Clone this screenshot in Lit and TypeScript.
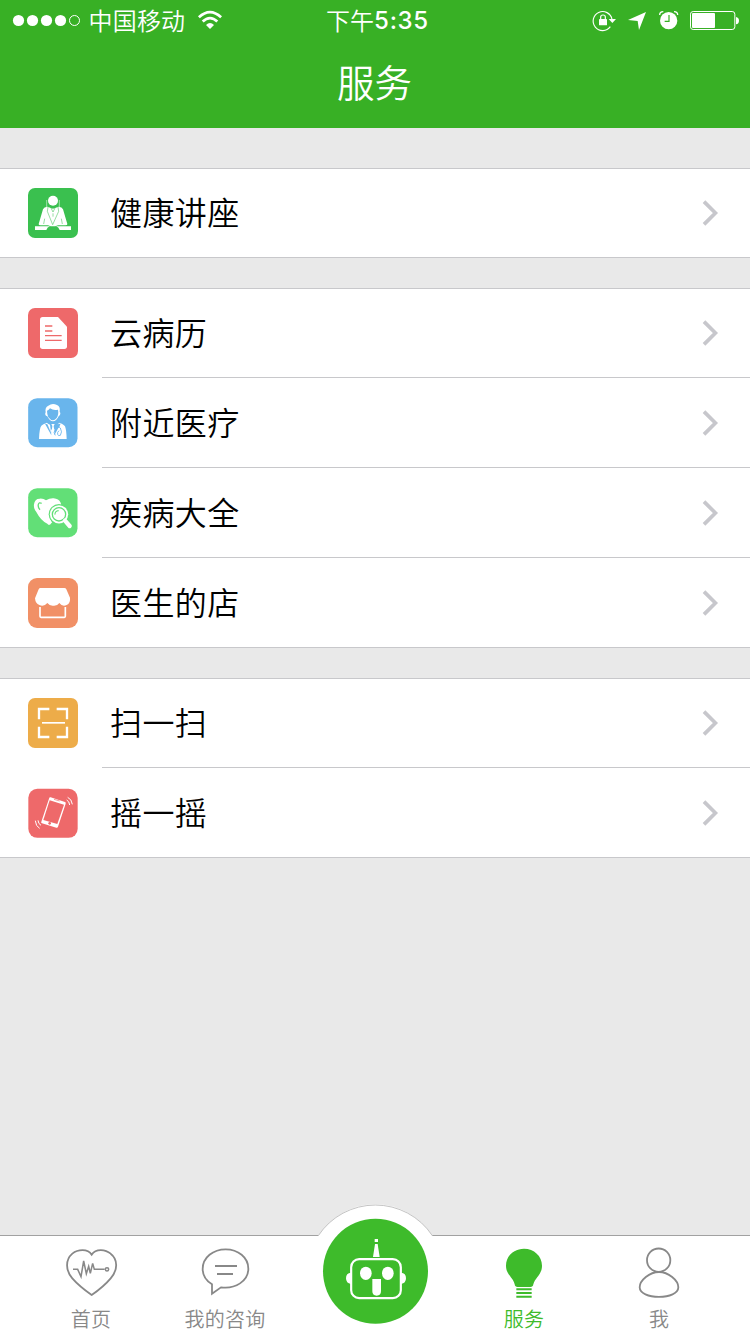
import { LitElement, html, css, svg } from "lit";
import { customElement, property } from "lit/decorators.js";

const icons: Record<string, unknown> = {
  lecture: svg`
    <rect width="150" height="150" rx="21" fill="#3ac04f"/>
    <g fill="#fff">
      <circle cx="75" cy="38" r="15"/>
      <path d="M58 56 Q48 57 45 64 L32 108 Q31 112 38 112 H60 L68 115 H82 L90 112 H112 Q119 112 118 108 L105 64 Q102 57 92 56 L75 62 Z"/>
      <path d="M21 115 H66 Q58 117 55 126 H21 Z M129 115 H84 Q92 117 95 126 H129 Z"/>
    </g>
    <path d="M56 36 V58 M94 36 V58" fill="none" stroke="#fff" stroke-width="1.5"/>
    <path d="M60 57 L58 70 L74 110 L92 70 L90 57 M68 58 L75 72 L82 58 M75 76 V86 M50 92 L47 108 M100 92 L103 108" fill="none" stroke="#3ac04f" stroke-width="1.6"/>`,
  record: svg`
    <rect width="150" height="150" rx="21" fill="#ee696a"/>
    <path d="M44 27 H90 L117 56 V115 Q117 123 109 123 H44 Q36 123 36 115 V35 Q36 27 44 27 Z" fill="#fff"/>
    <path d="M51 54 H73 M51 69 H73 M51 83 H101 M51 97 H101" stroke="#ee696a" stroke-width="3.8"/>`,
  doctor: svg`
    <rect x="0.5" y="0.5" width="148" height="147" rx="27" fill="#69b5ec"/>
    <path d="M53 43 Q50 28 61 23 Q73 14 87 21 Q98 25 95 42 Q99 44 96 51 Q93 53 92 55 Q85 70 75 70 Q65 70 58 55 Q53 54 52 50 Q51 45 53 43 Z" fill="#fff"/>
    <path d="M57 38 Q61 38 66 31 Q77 39 90 35 Q93 50 86 60 Q80 67 75 67 Q68 67 61 58 Q57 49 57 38 Z" fill="#69b5ec"/>
    <path d="M33 123 Q34 91 40 83 Q44 79 57 74 L73 99 L76 99 L93 74 Q108 79 111 85 Q115 94 116 123 Z" fill="#fff"/>
    <path d="M51 77 L70 112 L68 80 Z M98 77 L79 112 L82 80 Z" fill="#69b5ec"/>
    <path d="M57 76 L69 104 L66 80 Z" fill="#fff"/>
    <path d="M70 78 H80 L77 84 L79 98 L75 104 L71 98 L73 84 Z" fill="#fff"/>
    <path d="M93 77 V88 M82 112 Q75 105 81 95 Q91 83 97 90 Q104 102 97 112 Q90 115 89 109 Q87 103 93 98" fill="none" stroke="#69b5ec" stroke-width="2.6"/>`,
  disease: svg`
    <rect x="0.5" y="0.5" width="148" height="147" rx="27" fill="#62df77"/>
    <path d="M18 49 Q20 32 35 32 Q46 31 54 37 Q66 30 77 31 Q92 32 98 44 L100 52 Q79 49 68 66 Q58 85 73 102 L66 110 Q62 112 58 107 Q39 99 25 72 Q16 61 18 49 Z" fill="#fff"/>
    <path d="M41 46 Q33 42 31 49 Q29 58 36 65" fill="none" stroke="#62df77" stroke-width="4"/>
    <circle cx="93" cy="79" r="31" fill="#62df77"/>
    <circle cx="93" cy="79" r="27.500" fill="#fff"/>
    <circle cx="93" cy="79" r="20" fill="#fff" stroke="#62df77" stroke-width="4"/>
    <path d="M111 98 L125 114" stroke="#fff" stroke-width="13" stroke-linecap="round"/>
    <path d="M81 80 Q80 69 92 68" fill="none" stroke="#62df77" stroke-width="3.4"/>`,
  shop: svg`
    <rect width="150" height="150" rx="27" fill="#f19066"/>
    <path d="M37 30 H109 Q113 30 115 34 L126 59 Q128 76 116 81 Q103 87 94 75 Q88 84 76 83 Q65 84 58 75 Q48 87 34 81 Q22 76 21 61 L32 34 Q34 30 37 30 Z" fill="#fff"/>
    <path d="M36 87 V115 Q36 118 39 118 H109 Q112 118 112 115 V87" fill="none" stroke="#fff" stroke-width="5"/>`,
  scan: svg`
    <rect width="150" height="150" rx="21" fill="#edac49"/>
    <path d="M33 64 V33 H64 M86 33 H117 V64 M117 86 V117 H86 M64 117 H33 V86" fill="none" stroke="#fff" stroke-width="7"/>
    <path d="M42 74.500 H111" stroke="#fff" stroke-width="5"/>`,
  shake: svg`
    <rect x="1" y="2.5" width="148" height="147" rx="27" fill="#ee696a"/>
    <path d="M68 28 L111 42 Q114 43 113 47 L90 116 Q89 120 85 119 L42 106 Q38 105 40 101 L63 32 Q64 27 68 28 Z" fill="#fff"/>
    <path d="M65 37 L108 50 L88 108 L46 96 Z" fill="#ee696a"/>
    <path d="M78 34 L95 39" stroke="#ee696a" stroke-width="2"/>
    <circle cx="65" cy="106" r="4" fill="#ee696a"/>
    <path d="M119 28 Q131 33 133 49 M116 36 Q124 40 125 51 M22 98 Q23 115 35 121 M30 97 Q31 108 39 112" fill="none" stroke="#fff" stroke-width="3"/>`,
};

@customElement("service-row")
class ServiceRow extends LitElement {
  @property() icon = "";
  @property() label = "";

  static styles = css`
    :host { display: flex; box-sizing: border-box; height: 90px; padding: 1px 0 0 28px; }
    .icon { width: 50px; height: 50px; margin-top: 19px; flex: none; }
    .main {
      flex: 1; display: flex; align-items: center; justify-content: space-between;
      margin-left: 24px; padding: 0 31.5px 0 8px; height: 88px;
      border-bottom: 1px solid var(--row-line, #c8c8cb);
    }
    .label { font-size: 32px; line-height: 48px; letter-spacing: 0.4px; color: #000; padding-bottom: 4px; }
    .chevron { width: 17px; height: 28px; }
  `;

  render() {
    return html`
      <svg class="icon" viewBox="0 0 150 150">${icons[this.icon]}</svg>
      <div class="main">
        <span class="label">${this.label}</span>
        <svg class="chevron" viewBox="0 0 17 28">
          <path d="M2 2.6 L13.4 14 L2 25.4" fill="none" stroke="#c7c7cc" stroke-width="3.7"/>
        </svg>
      </div>`;
  }
}

const groups = [
  [["lecture", "健康讲座"]],
  [["record", "云病历"], ["doctor", "附近医疗"], ["disease", "疾病大全"], ["shop", "医生的店"]],
  [["scan", "扫一扫"], ["shake", "摇一摇"]],
];

@customElement("app-root")
class AppRoot extends LitElement {
  static styles = css`
    :host {
      display: flex; flex-direction: column; width: 750px; height: 1334px; overflow: hidden;
      background: #e9e9e9; font-family: "Noto Sans CJK SC", sans-serif; font-weight: 350;
    }
    .header { height: 128px; background: #38b025; color: #fff; flex: none; }
    .status { height: 40px; display: grid; grid-template: 40px / 1fr auto 1fr; align-items: center; }
    .left { display: flex; align-items: center; padding-left: 12px; height: 40px; }
    .dots { width: 70px; height: 14px; }
    .carrier { font-size: 24px; line-height: 40px; margin-left: 6.500px; letter-spacing: 0.2px; }
    .wifi { width: 26px; height: 20px; margin-left: 11.500px; }
    .time { display: flex; align-items: flex-start; height: 40px; font-size: 24px; line-height: 40px; padding-left: 5px; }
    .digits { font-family: Inter, sans-serif; font-weight: 500; letter-spacing: 0.7px; line-height: 42px; }
    .right { display: flex; justify-content: flex-end; }
    .indicators { width: 160px; height: 40px; }
    .title { height: 88px; line-height: 81px; font-size: 37.5px; text-align: center; margin: 0; padding-right: 1px; font-weight: inherit; }
    .list { flex: 1; display: flex; flex-direction: column; gap: 30px; padding-top: 40px; }
    .group { background: #fff; border-top: 1px solid #c8c8cb; border-bottom: 1px solid #c8c8cb; }
    .group service-row:first-child { height: 89px; padding-top: 0; }
    .group service-row:last-child { --row-line: transparent; height: 89px; }
    .group service-row:only-child { height: 88px; }
    .tabs {
      height: 98px; flex: none; background: #fff; border-top: 1px solid #a1a1a1; padding-left: 24px;
      display: grid; grid-template-columns: 134px 134px 166px 132px 138px; color: #888;
    }
    .tab { display: flex; flex-direction: column; align-items: center; padding-top: 4px; }
    .tab.active { color: #3ebb2b; }
    .tab-icon { width: 60px; height: 60px; flex: none; }
    .tab-label { font-size: 20px; line-height: 30px; letter-spacing: 0.2px; margin-top: 4px; }
    .robot { width: 150px; height: 139px; margin: -41px auto 0; }
  `;

  private tab(label: string, viewBox: string, art: unknown, active = false) {
    return html`<div class="tab ${active ? "active" : ""}">
      <svg class="tab-icon" viewBox=${viewBox} fill="none" stroke="currentColor" stroke-width="5.4">${art}</svg>
      <span class="tab-label">${label}</span>
    </div>`;
  }

  render() {
    return html`
      <div class="header">
        <div class="status">
          <div class="left">
            <svg class="dots" viewBox="0 0 70 14" fill="#fff">
              <circle cx="6.5" cy="7.5" r="5.6"/><circle cx="20.5" cy="7.5" r="5.6"/>
              <circle cx="34.5" cy="7.5" r="5.6"/><circle cx="48.5" cy="7.5" r="5.6"/>
              <circle cx="62.5" cy="7.5" r="5" fill="none" stroke="#fff"/>
            </svg>
            <span class="carrier">中国移动</span>
            <svg class="wifi" viewBox="0 0 26 20" fill="none" stroke="#fff" stroke-width="2.7">
              <path d="M1.9 7.3 Q13 -2.9 24.1 7.3"/>
              <path d="M5.7 11.5 Q13 4.7 20.3 11.5"/>
              <path d="M9 14.9 Q13 11 17 14.9 L13 19 Z" fill="#fff" stroke="none"/>
            </svg>
          </div>
          <div class="time"><span>下午</span><span class="digits">5:35</span></div>
          <div class="right">
            <svg class="indicators" viewBox="30 0 480 120" fill="none" stroke="#fff">
              <path d="M91 80 A28.5 28.5 0 1 1 96 58" stroke-width="3.4"/>
              <path d="M86 57 H108 L97 69 Z" fill="#fff" stroke="none"/>
              <rect x="57" y="57" width="24" height="19" rx="2" fill="#fff" stroke="none"/>
              <path d="M62 58 V51 Q62 45 69 45 Q76 45 76 51 V58" stroke-width="3.6"/>
              <path d="M198 36 L177 90 L173 63 L144 60 Z" fill="#fff" stroke="none"/>
              <circle cx="266" cy="62" r="26" fill="#fff" stroke="none"/>
              <path d="M239 45 Q239 35 250 35 M282 35 Q293 35 293 45" stroke-width="4"/>
              <path d="M267 45 V64 H254" stroke="#38b025" stroke-width="3.6"/>
              <rect x="331.500" y="34.500" width="133" height="54" rx="8" stroke-width="3"/>
              <rect x="336" y="39" width="69" height="45" rx="3" fill="#fff" stroke="none"/>
              <path d="M468 51 Q477 53 477 62 Q477 71 468 73 Z" fill="#fff" stroke="none"/>
            </svg>
          </div>
        </div>
        <h1 class="title">服务</h1>
      </div>
      <div class="list">
        ${groups.map((g) => html`<div class="group">
          ${g.map(([icon, label]) => html`<service-row icon=${icon} label=${label}></service-row>`)}
        </div>`)}
      </div>
      <div class="tabs">
        ${this.tab("首页", "63 45 180 180", svg`
          <path d="M155 89 C143 70 113 73 97 86 C75 105 77 137 97 160 Q117 183 155 210 Q192 184 212 160 C233 136 235 104 212 86 C197 73 168 69 155 89 Z"/>
          <path d="M99 133 H113 L123 155 L131 108 L139 146 L146 124 L151 145 L158 115 L163 133 H194" stroke-width="4.600"/>
          <circle cx="201" cy="133" r="5" stroke-width="4.600"/>`)}
        ${this.tab("我的咨询", "465 45 180 180", svg`
          <path d="M516 178 C495 165 488 150 488 132 C488 97 520 73 557 73 C594 73 625 97 625 131 C625 168 586 193 543 187 L516 206 Z"/>
          <path d="M525 123 H591 M531 147 H579"/>`)}
        <svg class="robot" viewBox="0 0 450 417" fill="#fff">
          <path d="M55 123 Q123 28 226 28 Q329 28 397 123 V200 H55 Z"/>
          <path d="M55 122 A205 205 0 0 1 397 122" stroke="#c4c4c4" stroke-width="3"/>
          <circle cx="226.500" cy="229" r="157.500" fill="#3ebb2b"/>
          <rect x="224" y="132" width="10" height="9"/>
          <path d="M225 147 H233 L239 186 H219 Z"/>
          <path d="M153 233 Q138 234 138 250 Q138 265 153 267 Z M303 233 Q318 234 318 250 Q318 265 303 267 Z"/>
          <rect x="153.500" y="192.500" width="149" height="117" rx="24" fill="none" stroke="#fff" stroke-width="6.500"/>
          <ellipse cx="197.500" cy="235" rx="17.500" ry="20"/><ellipse cx="263.500" cy="235" rx="17.500" ry="20"/>
          <path d="M217 252 H243 V288 Q243 302 230 302 Q217 302 217 288 Z"/>
        </svg>
        ${this.tab("服务", "42 45 180 180", svg`
          <path d="M132 71 C162 71 186 93 186 122 C186 149 165 158 160 178 Q159 186 151 186 H113 Q105 186 104 178 C100 158 78 149 78 122 C78 93 102 71 132 71 Z" fill="currentColor" stroke="none"/>
          <path d="M109 193 H155 M109 204 H155 M109 215.500 H155" stroke-width="6"/>`, true)}
        ${this.tab("我", "447 45 180 180", svg`
          <circle cx="536" cy="105.500" r="35"/>
          <path d="M537 141 C565 141 595 166 595 187 C595 205 568 215.500 537 215.500 C506 215.500 479 205 479 187 C479 166 509 141 537 141 Z"/>`)}
      </div>`;
  }
}
